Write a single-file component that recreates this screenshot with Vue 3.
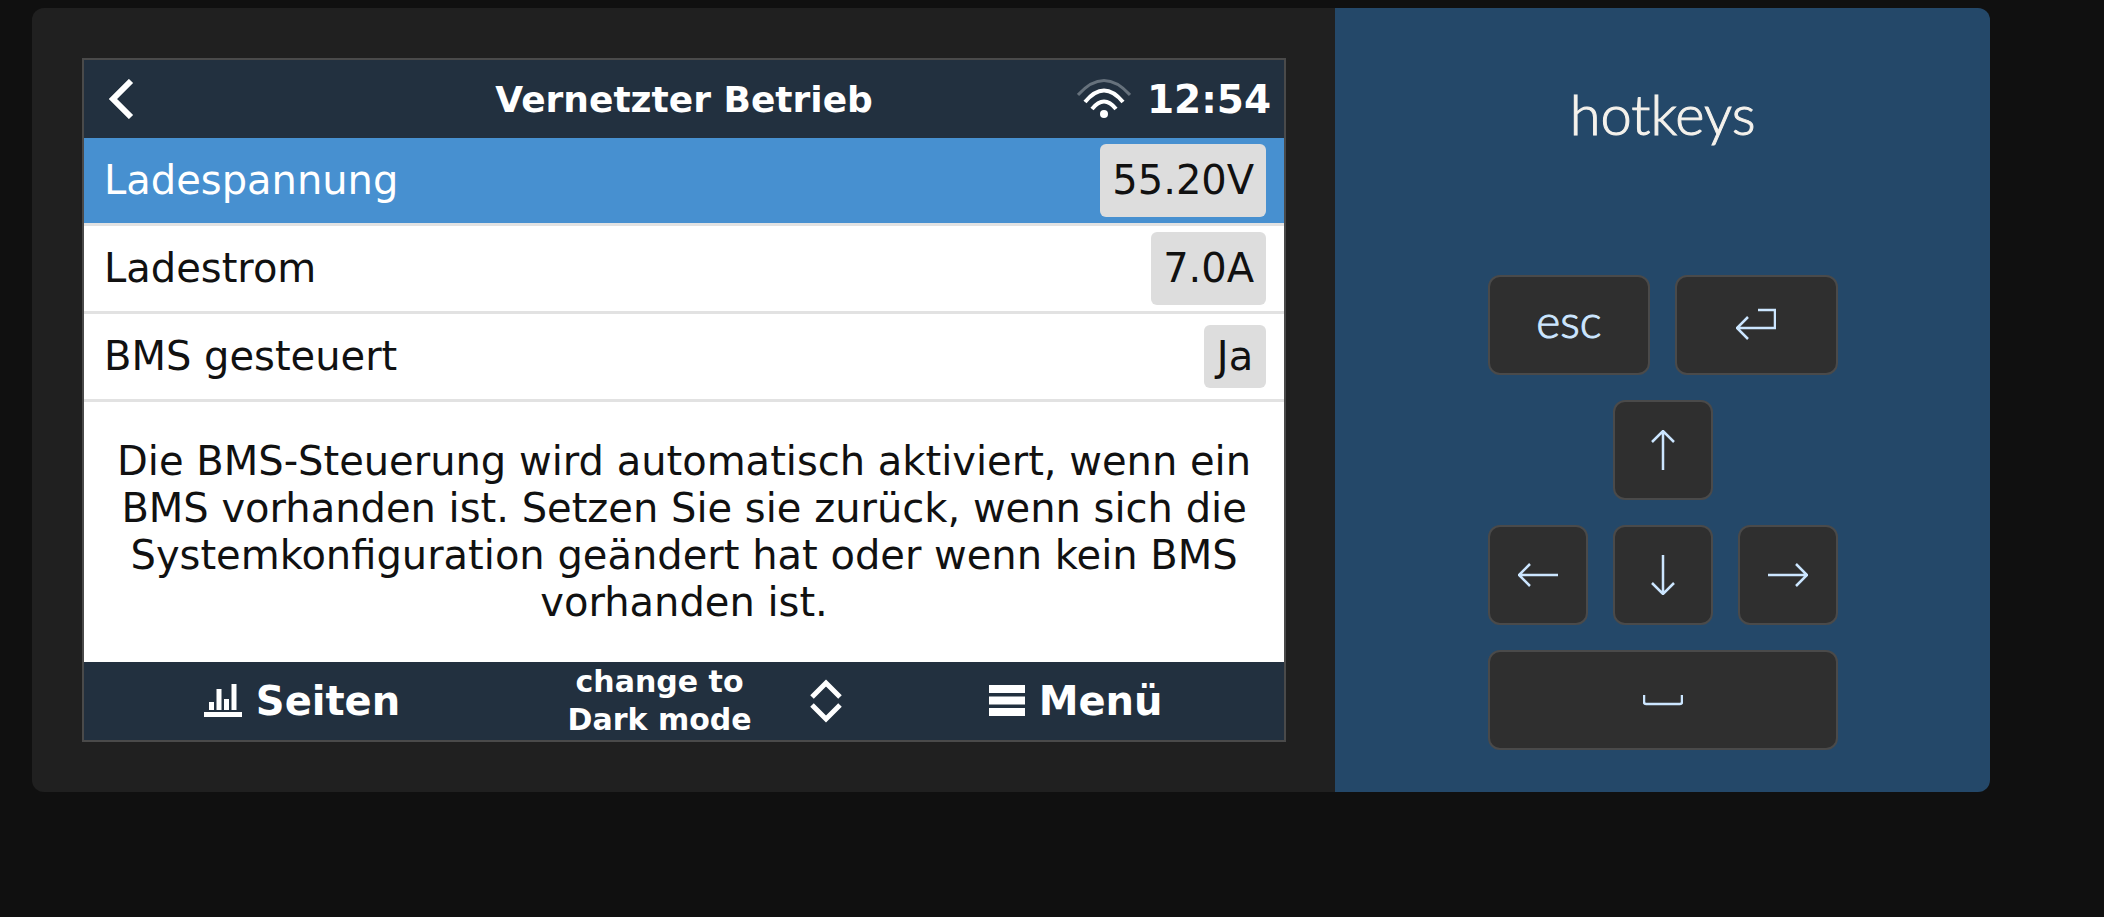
<template>
  <main class="console">
    <section class="display">
      <div class="screen">
        <header class="title-bar">
          <button class="back" type="button" aria-label="Zurück">
            <svg width="26" height="40" viewBox="0 0 26 40">
              <path d="M23 2 L5 20 L23 38" fill="none" stroke="#ffffff" stroke-width="6" />
            </svg>
          </button>
          <h1>Vernetzter Betrieb</h1>
          <div class="status">
            <svg width="54" height="40" viewBox="0 0 54 40" fill="none" stroke="#ffffff">
              <path d="M1 16 Q27 -13 53 16" stroke="#66717c" stroke-width="3" />
              <path d="M8 23 Q27 0 46 23" stroke-width="4" />
              <path d="M15 30 Q27 15 39 30" stroke-width="4" />
              <circle cx="27" cy="35" r="4" fill="#ffffff" stroke="none" />
            </svg>
            <time>12:54</time>
          </div>
        </header>

        <ul class="settings">
          <li v-for="item in settings" :key="item.label" :class="{ active: item.label === selected }" @click="selected = item.label">
            <span>{{ item.label }}</span>
            <button class="value" :class="{ compact: item.compact }" type="button">{{ item.value }}</button>
          </li>
        </ul>

        <p class="note">
          Die BMS-Steuerung wird automatisch aktiviert, wenn ein BMS vorhanden ist. Setzen Sie sie zurück, wenn sich die
          Systemkonfiguration geändert hat oder wenn kein BMS vorhanden ist.
        </p>

        <footer class="tool-bar">
          <button class="tool" type="button">
            <svg width="38" height="34" viewBox="0 0 38 34" fill="#ffffff">
              <path d="M5 18h5v8H5z M12.5 5h5v21h-5z M20 15h5v11h-5z M27.5 0h5v26h-5z M0 28h38v5H0z" />
            </svg>
            Seiten
          </button>
          <button class="tool mode" type="button">
            <span>change to<br />Dark mode</span>
            <svg width="32" height="44" viewBox="0 0 32 44" fill="none" stroke="#ffffff" stroke-width="5">
              <path d="M2 18 L16 4 L30 18 M2 26 L16 40 L30 26" />
            </svg>
          </button>
          <button class="tool" type="button">
            <svg width="36" height="32" viewBox="0 0 36 32" fill="#ffffff">
              <path d="M0 0h36v8H0z M0 11.5h36v8H0z M0 23h36v8H0z" />
            </svg>
            Menü
          </button>
        </footer>
      </div>
    </section>

    <aside class="hotkeys">
      <h2>hotkeys</h2>
      <div class="keypad">
        <div v-for="(row, index) in keyRows" :key="index" class="key-row">
          <button
            v-for="key in row"
            :key="key.name"
            class="key"
            :class="{ wide: key.wide }"
            type="button"
            :aria-label="key.name"
            @click="press(key.name)"
          >
            <svg v-if="key.icon" width="40" height="40" viewBox="0 0 40 40">
              <path :d="key.icon" />
            </svg>
            <span v-else>{{ key.name }}</span>
          </button>
        </div>
      </div>
    </aside>
  </main>
</template>

<script setup>
import { ref } from 'vue'

const settings = [
  { label: 'Ladespannung', value: '55.20V' },
  { label: 'Ladestrom', value: '7.0A' },
  { label: 'BMS gesteuert', value: 'Ja', compact: true },
]

const keyRows = [
  [
    { name: 'esc', wide: true },
    { name: 'enter', wide: true, icon: 'M22 5 H39 V23 H1 M12 12 L1 23 L12 34' },
  ],
  [{ name: 'up', icon: 'M20 40 V1 M9 12 L20 1 L31 12' }],
  [
    { name: 'left', icon: 'M40 20 H1 M12 9 L1 20 L12 31' },
    { name: 'down', icon: 'M20 0 V39 M9 28 L20 39 L31 28' },
    { name: 'right', icon: 'M0 20 H39 M28 9 L39 20 L28 31' },
  ],
  [{ name: 'space', wide: true, icon: 'M1 15 V22 Q1 24 3 24 H37 Q39 24 39 22 V15' }],
]

const selected = ref('Ladespannung')

const press = (name) => {
  const index = settings.findIndex((item) => item.label === selected.value)
  if (name === 'up' && index > 0) selected.value = settings[index - 1].label
  if (name === 'down' && index < settings.length - 1) selected.value = settings[index + 1].label
}
</script>

<style>
body {
  background: #101010;
}
</style>

<style scoped>
.console {
  display: grid;
  grid-template-columns: 199fr 100fr;
  margin: 8px 114px 0 32px;
  border-radius: 12px;
  overflow: hidden;
}

button {
  padding: 0;
  border: none;
  background: none;
  color: inherit;
  font: inherit;
  cursor: pointer;
}

svg {
  display: block;
}

.display {
  padding: 50px 49px 50px 50px;
  background: #202020;
}

.screen {
  border: 2px solid #4a4a4a;
  background: #ffffff;
  color: #111111;
  font-family: 'DejaVu Sans', sans-serif;
  font-size: 40px;
  line-height: 47px;
}

.title-bar {
  display: grid;
  grid-template-columns: 1fr auto 1fr;
  align-items: center;
  height: 78px;
  padding: 0 13px;
  background: #22303f;
  color: #ffffff;
}

.back {
  justify-self: start;
  padding: 0 11px;
}

.title-bar h1 {
  margin: 0;
  font-size: 36px;
}

.status {
  display: flex;
  align-items: center;
  justify-content: flex-end;
  gap: 16px;
  font-size: 39px;
  font-weight: 700;
}

.settings {
  margin: 0;
  padding: 0;
  list-style: none;
}

.settings li {
  display: flex;
  align-items: center;
  justify-content: space-between;
  height: 85px;
  padding: 0 18px 0 20px;
  border-bottom: 3px solid #e2e2e2;
}

.settings .active {
  background: #4790d0;
}

.active span {
  color: #ffffff;
}

.value {
  padding: 13px 12px;
  border-radius: 6px;
  background: #dddddd;
}

.value.compact {
  padding: 8px 13px;
}

.note {
  margin: 0;
  padding: 36px 28px;
  text-align: center;
}

.tool-bar {
  display: grid;
  grid-template-columns: 436fr 369fr 373fr;
  align-items: center;
  height: 78px;
  padding-right: 22px;
  background: #22303f;
  color: #ffffff;
  font-weight: 700;
}

.tool {
  display: flex;
  align-items: center;
  justify-content: center;
  gap: 14px;
}

.mode {
  gap: 58px;
  font-size: 30px;
  line-height: 38px;
}

.hotkeys {
  display: flex;
  flex-direction: column;
  align-items: center;
  justify-content: space-between;
  padding: 70px 0 42px;
  background: #244869;
  font-family: Lato, sans-serif;
  font-weight: 300;
  -webkit-text-stroke: 1px currentColor;
}

.hotkeys h2 {
  margin: 0;
  color: #f5f2ec;
  font-size: 56px;
  font-weight: 300;
  line-height: 72px;
}

.keypad {
  display: flex;
  flex-direction: column;
  gap: 25px;
  width: 350px;
}

.key-row {
  display: flex;
  justify-content: center;
  gap: 25px;
}

.key {
  display: flex;
  align-items: center;
  justify-content: center;
  width: 100px;
  height: 100px;
  border: 2px solid #4a4a4a;
  border-radius: 12px;
  background: #2f2f2f;
  color: #cce6ff;
  font-size: 46px;
  line-height: 60px;
}

.key span {
  padding-bottom: 8px;
  -webkit-text-stroke: 1px #cce6ff;
}

.key.wide {
  flex: 1;
}

.key path {
  fill: none;
  stroke: #cce6ff;
  stroke-width: 2.5;
}
</style>
